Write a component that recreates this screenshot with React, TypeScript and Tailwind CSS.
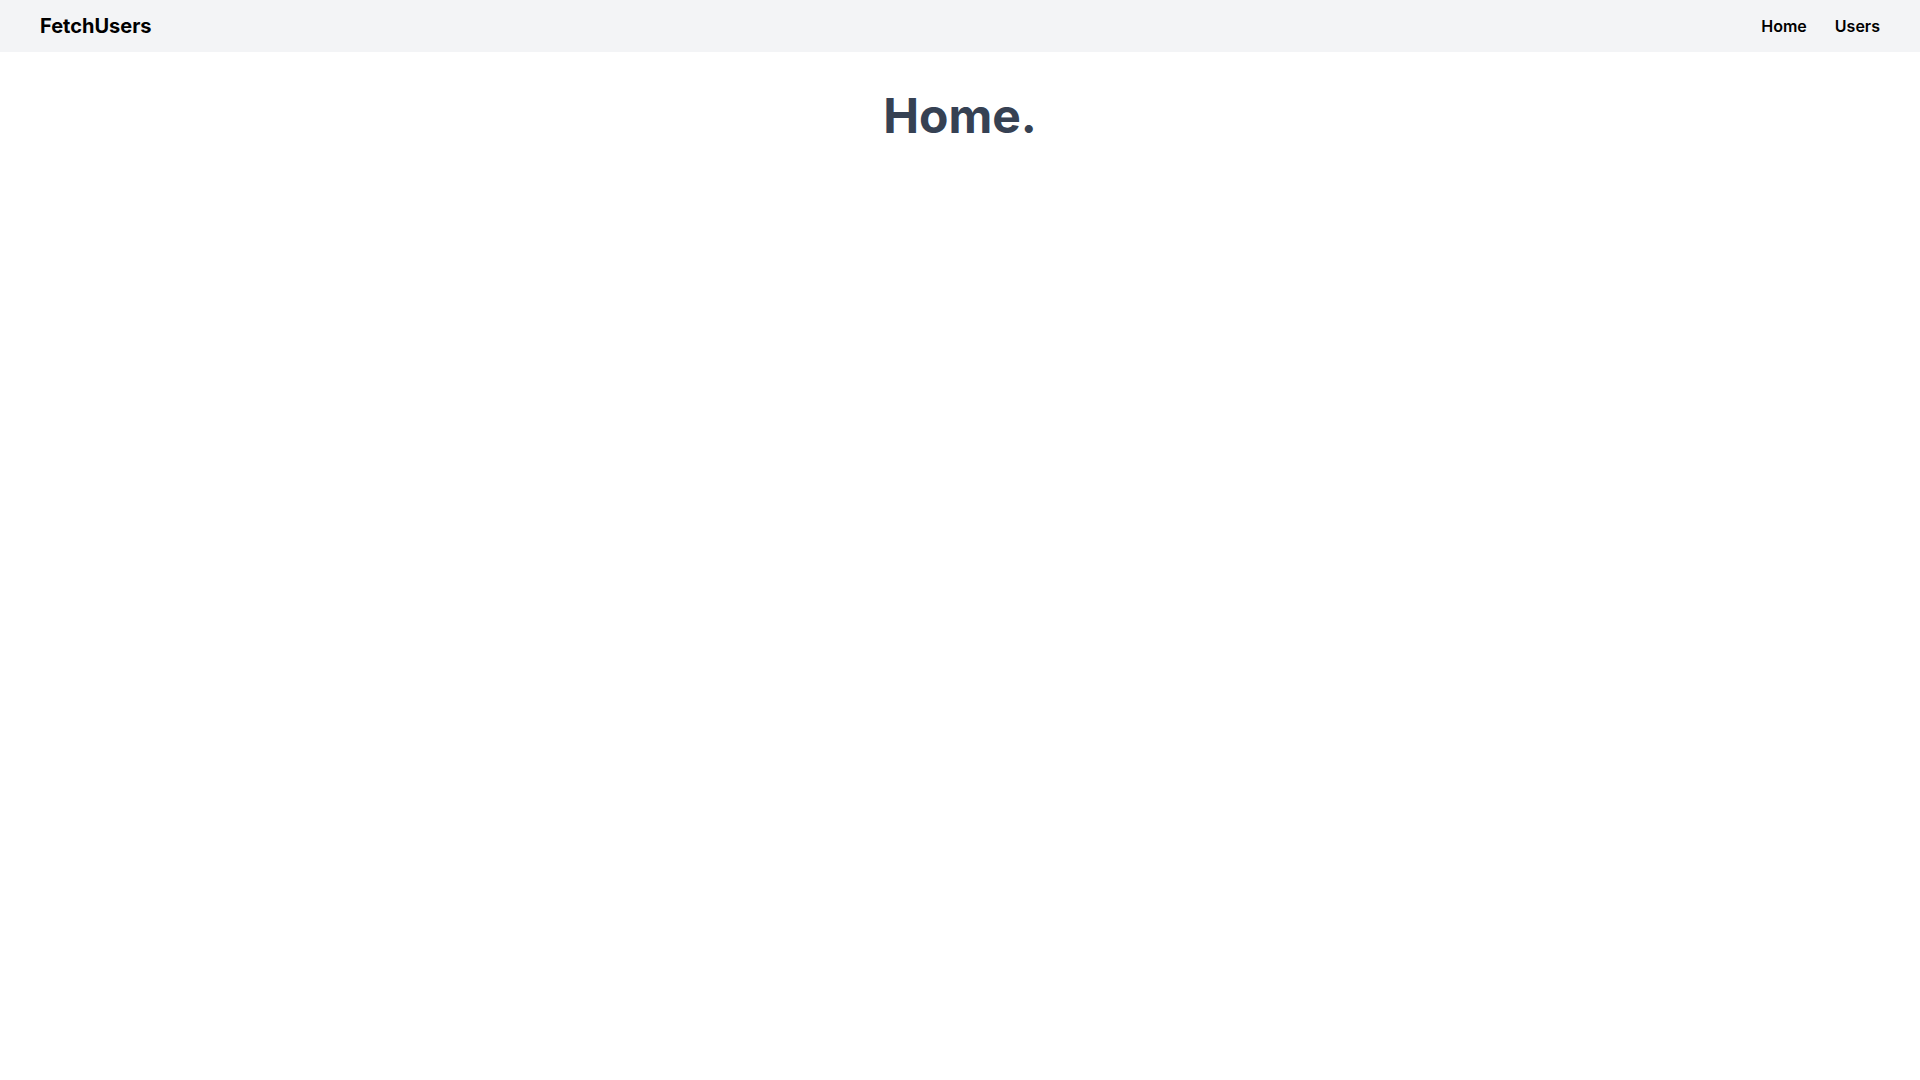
export default function App() {
  return (
    <div className="min-h-screen bg-white" style={{ fontFamily: 'Inter, "Noto Sans", sans-serif' }}>
      <header className="flex items-center justify-between bg-gray-100 px-10 py-3">
        <a href="#" className="text-xl font-bold text-black">
          FetchUsers
        </a>
        <nav className="flex items-center gap-7">
          <a href="#" className="text-base font-semibold text-black">
            Home
          </a>
          <a href="#" className="text-base font-semibold text-black">
            Users
          </a>
        </nav>
      </header>
      <main className="mt-10 flex justify-center">
        <h1 className="text-5xl font-bold text-gray-700">Home.</h1>
      </main>
    </div>
  );
}
